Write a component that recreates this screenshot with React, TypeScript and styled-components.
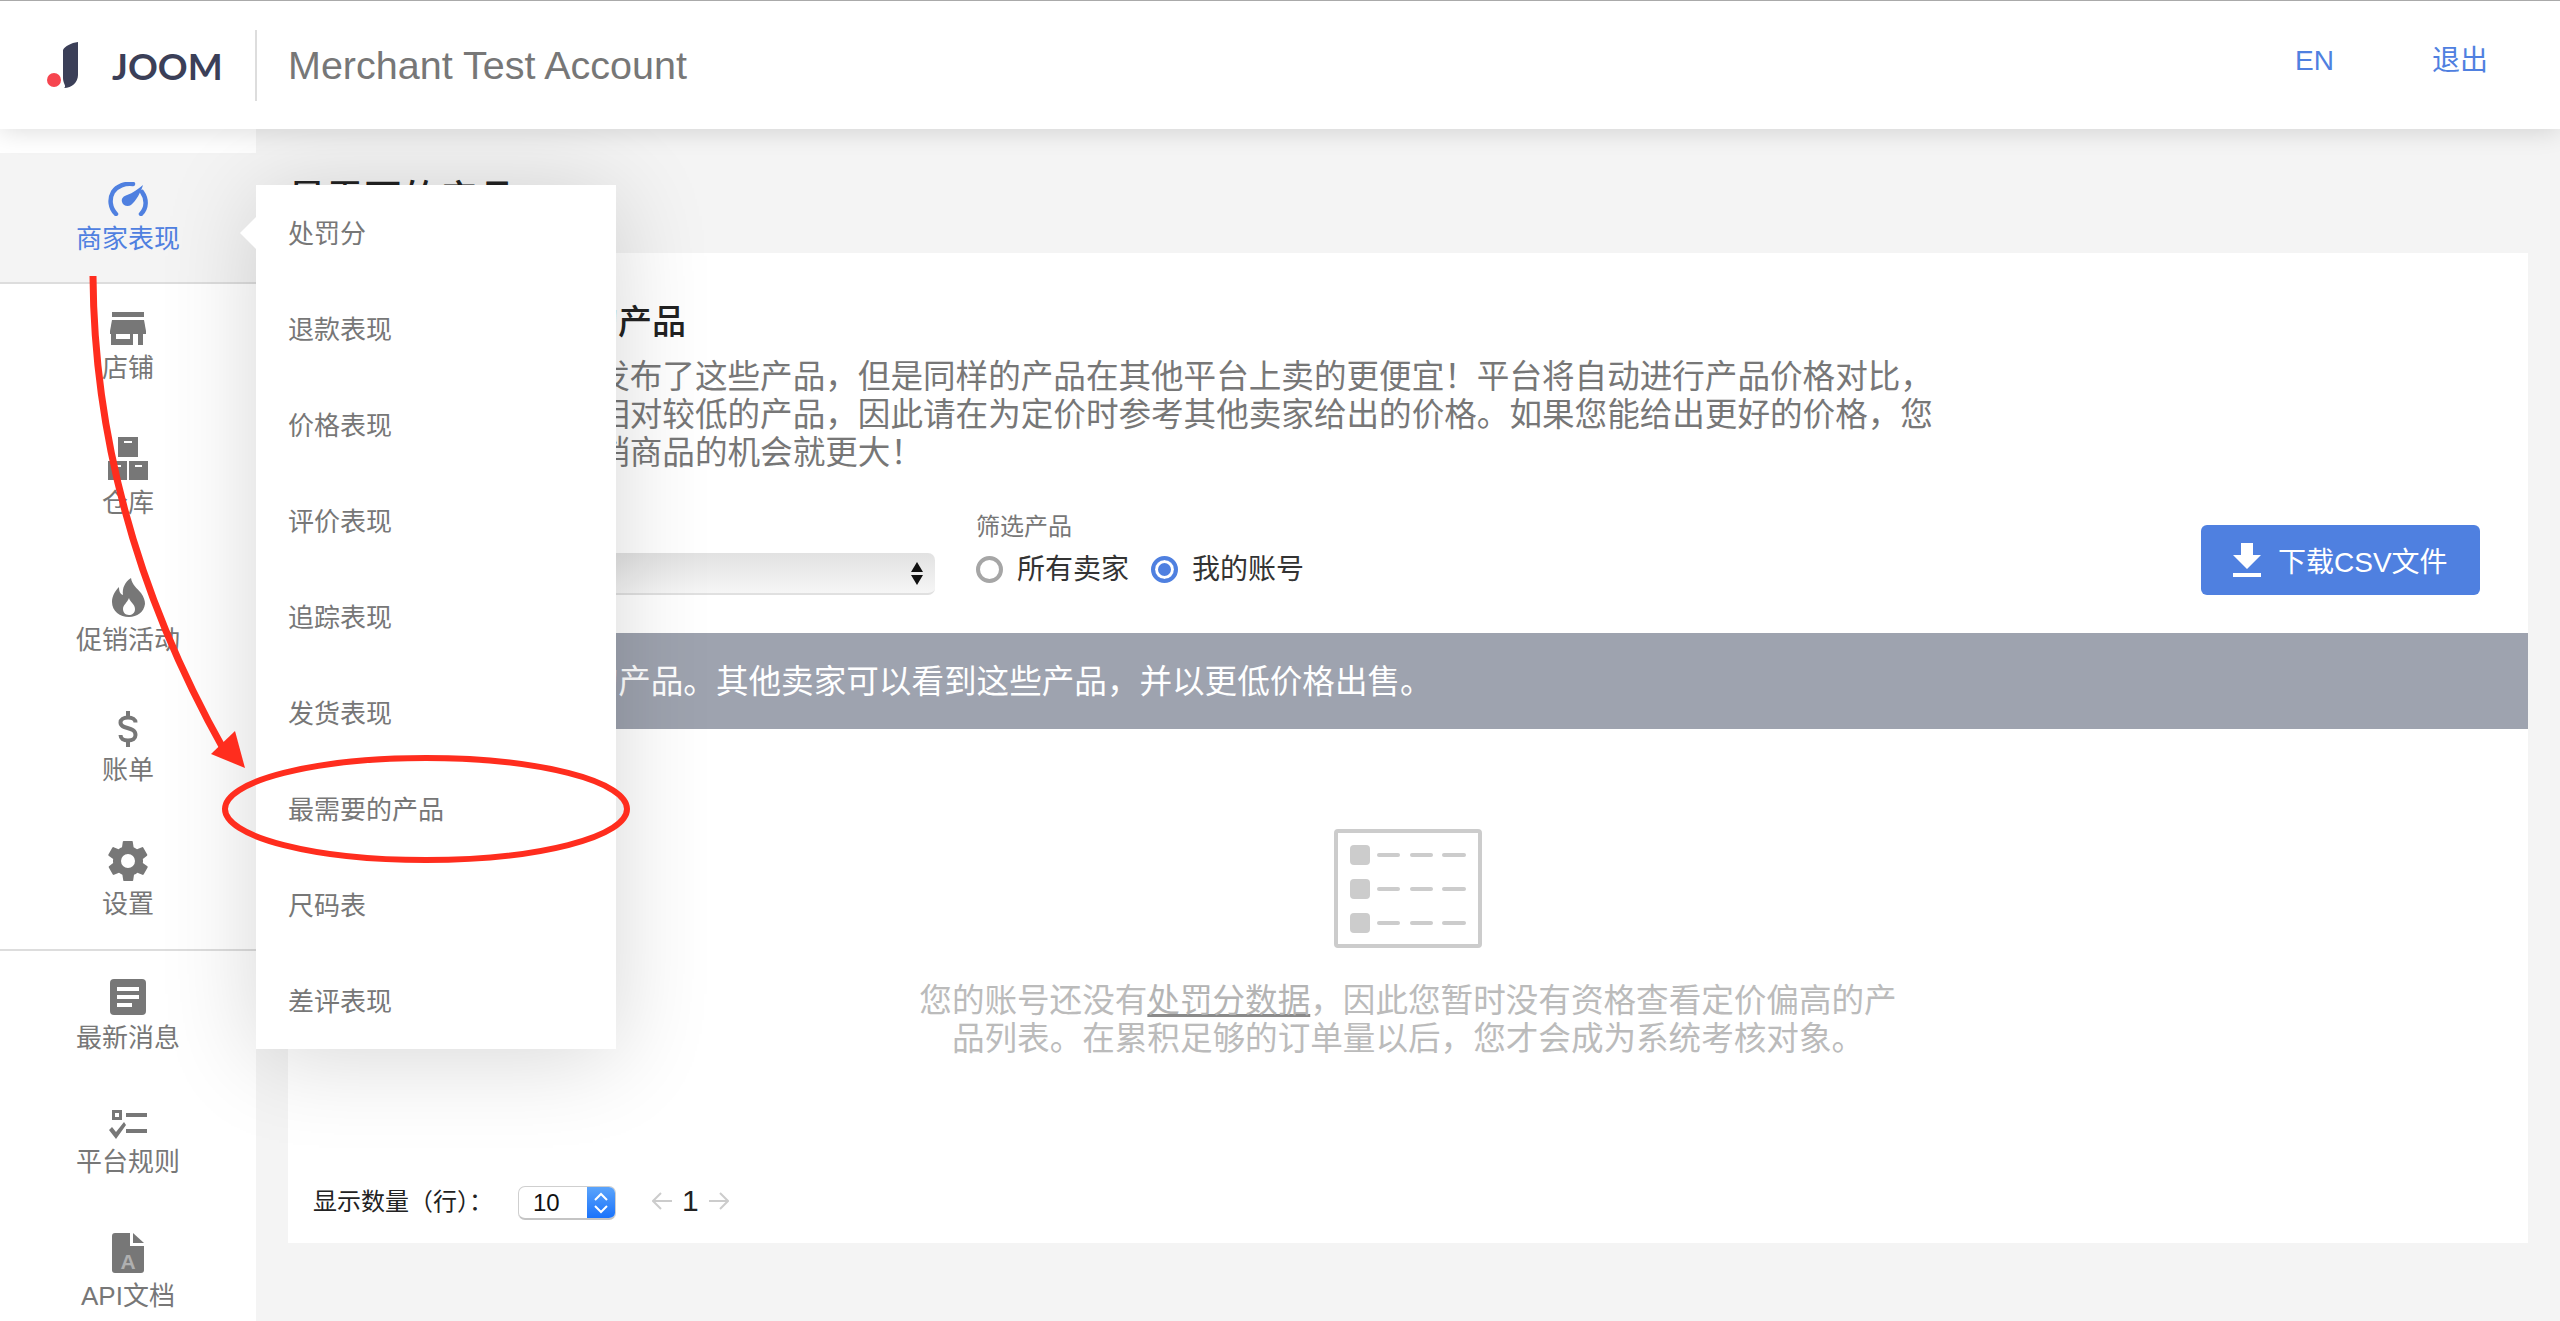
import { ReactNode } from "react";
import styled, { createGlobalStyle } from "styled-components";

const blue = "#4f80e0";
const grey = "#777777";

const GlobalStyle = createGlobalStyle`
  html, body {
    margin: 0;
    padding: 0;
    background: #f4f4f4;
  }
  * {
    box-sizing: border-box;
  }
  body {
    font-family: "Liberation Sans", "Noto Sans CJK SC", sans-serif;
  }
`;

const GaugeIcon = () => (
  <svg width="42" height="34" viewBox="0 0 42 34">
    <path d="M9 32C3 26 2 17 6 10C10 4 18 1 26 2" fill="none" stroke={blue} strokeWidth="4.5" strokeLinecap="round" />
    <path d="M35 10C40 17 40 26 34 32" fill="none" stroke={blue} strokeWidth="4.5" strokeLinecap="round" />
    <path d="M36 3C34 10 29 19 24 23C21 25 16 24 15 20C14 16 17 14 20 13C26 11 31 7 36 3Z" fill={blue} />
  </svg>
);

const StoreIcon = () => (
  <svg width="36" height="33" viewBox="0 0 36 33">
    <rect x="2" y="0" width="32" height="5" fill={grey} />
    <path d="M2 8H34L36 19V22H0V19Z" fill={grey} />
    <path d="M1 22H6V27H20V22H23V33H1Z" fill={grey} />
    <rect x="28" y="22" width="5" height="11" fill={grey} />
  </svg>
);

const WarehouseIcon = () => (
  <svg width="40" height="43" viewBox="0 0 40 43">
    <rect x="10" y="0" width="20" height="20" fill={grey} />
    <rect x="0" y="24" width="19" height="19" fill={grey} />
    <rect x="21" y="24" width="19" height="19" fill={grey} />
    <rect x="16" y="4" width="8" height="2" fill="#fff" />
    <rect x="6" y="28" width="7" height="2" fill="#fff" />
    <rect x="27" y="28" width="7" height="2" fill="#fff" />
  </svg>
);

const FireIcon = () => (
  <svg width="33" height="39" viewBox="0 0 33 39">
    <path
      d="M19 0C20 7 25 10 29 15C32 19 33 23 33 26C32 34 25 39 17 39C8 39 0 33 0 24C0 18 3 13 7 9C7 13 8 16 11 17C10 10 13 4 19 0Z"
      fill={grey}
    />
    <path d="M17 20C18 24 23 26 23 31C23 35 20 37 17 37C13 37 11 34 11 31C11 27 15 25 17 20Z" fill="#fff" />
  </svg>
);

const DollarIcon = () => (
  <svg width="20" height="36" viewBox="0 0 20 36">
    <path d="M17.5 11.5C17.5 8.5 14.5 6.5 10 6.5C5.5 6.5 2.5 8.5 2.5 11.5C2.5 19 17.5 15 17.5 24C17.5 27.500 14.5 29.500 10 29.500C5.5 29.500 2.5 27.500 2.5 24" fill="none" stroke={grey} strokeWidth="4" />
    <rect x="8" y="0" width="4" height="7" fill={grey} />
    <rect x="8" y="29" width="4" height="7" fill={grey} />
  </svg>
);

const GearIcon = () => (
  <svg width="40" height="40" viewBox="2 2 20 20">
    <path
      d="M19.4 13c.1-.3.1-.7.1-1s0-.7-.1-1l2.100-1.600c.2-.2.2-.4.1-.6l-2-3.500c-.1-.2-.4-.3-.6-.2l-2.500 1c-.5-.4-1.100-.7-1.700-1l-.4-2.600c0-.3-.2-.5-.5-.5h-4c-.3 0-.5.2-.5.400l-.4 2.700c-.6.2-1.200.6-1.700 1l-2.500-1c-.2-.1-.5 0-.6.2l-2 3.500c-.1.2-.1.4.1.600L4.600 11c-.1.3-.1.7-.1 1s0 .7.1 1l-2.100 1.600c-.2.2-.2.4-.1.6l2 3.500c.1.2.4.3.6.2l2.500-1c.5.4 1.100.7 1.700 1l.4 2.600c0 .3.2.5.5.5h4c.3 0 .5-.2.5-.4l.4-2.700c.6-.2 1.200-.6 1.700-1l2.500 1c.2.1.5 0 .6-.2l2-3.500c.1-.2.1-.4-.1-.6zM12 15.500a3.500 3.500 0 1 1 0-7 3.500 3.500 0 0 1 0 7z"
      fill={grey}
    />
  </svg>
);

const NewsIcon = () => (
  <svg width="36" height="36" viewBox="0 0 36 36">
    <rect width="36" height="36" rx="4" fill={grey} />
    <rect x="7" y="8" width="22" height="4" fill="#fff" />
    <rect x="7" y="16" width="22" height="4" fill="#fff" />
    <rect x="7" y="24" width="15" height="4" fill="#fff" />
  </svg>
);

const RulesIcon = () => (
  <svg width="38" height="29" viewBox="0 0 38 29">
    <path d="M3 0H13V10H3ZM6 3V7H10V3Z" fill={grey} fillRule="evenodd" />
    <rect x="17" y="3" width="21" height="4" fill={grey} />
    <rect x="17" y="19" width="21" height="4" fill={grey} />
    <path d="M0 20L3 17L7 22L15 12L17 15L7 29Z" fill={grey} />
  </svg>
);

const ApiIcon = () => (
  <svg width="32" height="40" viewBox="0 0 32 40">
    <path d="M3 0H18V13H32V37C32 39 31 40 29 40H3C1 40 0 39 0 37V3C0 1 1 0 3 0Z" fill={grey} />
    <path d="M21 0L32 10H21Z" fill={grey} />
    <text x="16" y="36" fontSize="21" fontWeight="700" textAnchor="middle" fill="#b0b0b0" fontFamily="Liberation Sans, sans-serif">
      A
    </text>
  </svg>
);

const DownloadIcon = () => (
  <svg width="28" height="34" viewBox="0 0 28 34">
    <path d="M8 0H20V12H28L14 26L0 12H8Z" fill="#fff" />
    <rect x="0" y="30" width="28" height="4" fill="#fff" />
  </svg>
);

const EmptyIcon = () => (
  <svg width="148" height="119" viewBox="0 0 148 119">
    <rect x="2" y="2" width="144" height="115" rx="2" fill="none" stroke="#cccccc" strokeWidth="4" />
    {[16, 50, 84].map((y) => (
      <g key={y} fill="#cccccc">
        <rect x="16" y={y} width="20" height="20" rx="4" />
        <rect x="43" y={y + 8} width="23" height="4" rx="2" />
        <rect x="76" y={y + 8} width="23" height="4" rx="2" />
        <rect x="108" y={y + 8} width="24" height="4" rx="2" />
      </g>
    ))}
  </svg>
);

const Page = styled.div`
  position: relative;
  height: 100vh;
  overflow: hidden;
  display: flex;
  flex-direction: column;
  background: #f4f4f4;
`;

const Header = styled.header`
  position: relative;
  z-index: 3;
  height: 129px;
  flex: none;
  display: flex;
  align-items: center;
  background: #fff;
  border-top: 1px solid #aaaaaa;
  box-shadow: 0 2px 24px rgba(0, 0, 0, 0.14);
  padding-left: 47px;
  padding-right: 72px;
`;

const LogoMark = styled.svg`
  width: 32px;
  height: 46px;
  flex: none;
`;

const LogoText = styled.span`
  margin-left: 33px;
  width: 143px;
  font-family: "Lato", sans-serif;
  font-size: 37px;
  font-weight: 700;
  color: #3b3f58;
`;

const LogoDivider = styled.div`
  width: 2px;
  height: 71px;
  background: #dddddd;
  margin-right: 31px;
`;

const AccountName = styled.span`
  font-size: 39.5px;
  line-height: 48px;
  color: ${grey};
`;

const HeaderLinks = styled.nav`
  margin-left: auto;
  display: flex;
  align-items: center;
  gap: 98px;
  margin-top: -8px;
`;

const HeaderLink = styled.a`
  font-size: 28px;
  line-height: 40px;
  color: ${blue};
`;

const Body = styled.div`
  flex: 1;
  display: flex;
  min-height: 0;
`;

const Sidebar = styled.aside`
  width: 256px;
  flex: none;
  background: #fff;
  padding-top: 24px;
`;

const NavItem = styled.div<{ $top: number; $bottom?: number; $active?: boolean; $rule?: boolean }>`
  display: flex;
  flex-direction: column;
  align-items: center;
  padding-top: ${(p) => p.$top}px;
  padding-bottom: ${(p) => p.$bottom ?? 0}px;
  background: ${(p) => (p.$active ? "#f4f4f4" : "transparent")};
  border-bottom: ${(p) => (p.$rule ? "2px solid #dddddd" : "none")};
  color: ${(p) => (p.$active ? blue : grey)};
`;

const NavLabel = styled.span`
  font-size: 26px;
  line-height: 36px;
  margin-top: 5px;
`;

const Main = styled.main`
  flex: 1;
  min-width: 0;
  padding: 46px 32px 0;
`;

const PageTitle = styled.h1`
  margin: 0 0 30px;
  font-size: 38px;
  line-height: 48px;
  font-weight: 500;
  color: #222222;
`;

const Card = styled.section`
  height: 990px;
  background: #fff;
  display: flex;
  flex-direction: column;
`;

const CardHead = styled.div`
  padding: 47px 48px 0 16px;
`;

const CardTitle = styled.h2`
  margin: 0 0 14px 8px;
  font-size: 34px;
  line-height: 44px;
  font-weight: 500;
  color: #222222;
  white-space: nowrap;
`;

const Intro = styled.p`
  margin: 0;
  width: 1640px;
  font-size: 32.6px;
  line-height: 38px;
  color: ${grey};
`;

const Controls = styled.div`
  display: flex;
  align-items: flex-end;
  margin-top: 40px;
  margin-bottom: 38px;
`;

const ProductSelect = styled.div`
  width: 631px;
  height: 42px;
  border-radius: 7px;
  background: linear-gradient(#e2e2e2, #f6f6f6);
  border-bottom: 2px solid #e0e0e0;
  display: flex;
  align-items: center;
  justify-content: flex-end;
  padding-right: 12px;
`;

const SelectArrows = styled.span`
  display: flex;
  flex-direction: column;
  gap: 3px;
`;

const ArrowUp = styled.i`
  display: block;
  border-left: 6px solid transparent;
  border-right: 6px solid transparent;
  border-bottom: 10px solid #111111;
`;

const ArrowDown = styled.i`
  display: block;
  border-left: 6px solid transparent;
  border-right: 6px solid transparent;
  border-top: 10px solid #111111;
`;

const FilterGroup = styled.div`
  margin-left: 41px;
  height: 83px;
`;

const FilterLabel = styled.div`
  font-size: 24px;
  line-height: 30px;
  color: ${grey};
`;

const RadioRow = styled.div`
  display: flex;
  align-items: center;
  gap: 22px;
  margin-top: 11px;
`;

const RadioOption = styled.label`
  display: flex;
  align-items: center;
  gap: 14px;
  font-size: 28px;
  line-height: 34px;
  color: #333333;
`;

const RadioDot = styled.span<{ $checked?: boolean }>`
  width: 27px;
  height: 27px;
  margin-top: -2px;
  border-radius: 50%;
  background: #fff;
  border: ${(p) => (p.$checked ? `4px solid ${blue}` : "4px solid #a6a6a6")};
  box-shadow: ${(p) => (p.$checked ? `inset 0 0 0 3px #fff, inset 0 0 0 12px ${blue}` : "none")};
`;

const DownloadButton = styled.button`
  margin-left: auto;
  width: 279px;
  height: 70px;
  padding: 0 0 0 32px;
  border: none;
  border-radius: 6px;
  background: ${blue};
  color: #fff;
  font-family: inherit;
  font-size: 28px;
  display: flex;
  align-items: center;
  gap: 17px;
`;

const Banner = styled.div`
  height: 96px;
  flex: none;
  display: flex;
  align-items: center;
  padding: 0 0 5px 37px;
  background: #9ea3af;
  color: #fff;
  font-size: 32.6px;
`;

const EmptyState = styled.div`
  display: flex;
  flex-direction: column;
  align-items: center;
  margin-top: 100px;
`;

const EmptyText = styled.p`
  width: 985px;
  margin: 34px 0 0;
  text-align: center;
  font-size: 32.6px;
  line-height: 38px;
  color: #bbbbbb;
`;

const EmptyLink = styled.a`
  color: #b4b4b4;
  text-decoration: underline;
  text-decoration-color: #8a8a8a;
`;

const Footer = styled.div`
  margin-top: auto;
  padding: 0 0 23px 25px;
  display: flex;
  align-items: center;
`;

const FooterLabel = styled.span`
  width: 205px;
  font-size: 24px;
  line-height: 32px;
  margin-top: -2px;
  color: #222222;
`;

const RowsSelect = styled.div`
  width: 98px;
  height: 34px;
  border-radius: 7px;
  border: 1px solid #cfcfcf;
  border-bottom: 2px solid #c4c4c4;
  background: #fff;
  display: flex;
  align-items: stretch;
  justify-content: space-between;
  font-size: 24px;
  line-height: 32px;
  padding-left: 14px;
  color: #111111;
  overflow: hidden;
`;

const RowsStepper = styled.span`
  width: 28px;
  background: linear-gradient(#5ba4fb, #1a73fb);
  display: flex;
  align-items: center;
  justify-content: center;
`;

const Pager = styled.div`
  margin-left: 36px;
  margin-top: -4px;
  display: flex;
  align-items: center;
  gap: 10px;
  font-size: 30px;
  line-height: 34px;
  color: #222222;
`;

const Flyout = styled.div`
  position: absolute;
  z-index: 2;
  left: 256px;
  top: 185px;
  width: 360px;
  height: 864px;
  padding: 0 32px;
  background: #fff;
  box-shadow: 0 8px 90px rgba(0, 0, 0, 0.16);
  display: flex;
  flex-direction: column;

  &::before {
    content: "";
    position: absolute;
    left: -16px;
    top: 32px;
    border-top: 16px solid transparent;
    border-bottom: 16px solid transparent;
    border-right: 16px solid #fff;
  }
`;

const FlyoutItem = styled.div`
  height: 96px;
  padding-bottom: 3px;
  display: flex;
  align-items: center;
  font-size: 26px;
  color: ${grey};
`;

const Annotation = styled.svg`
  position: absolute;
  z-index: 4;
  left: 0;
  top: 0;
  width: 700px;
  height: 900px;
  pointer-events: none;
`;

type NavEntry = {
  label: string;
  icon: ReactNode;
  top: number;
  bottom?: number;
  active?: boolean;
  rule?: boolean;
};

const navItems: NavEntry[] = [
  { label: "商家表现", icon: <GaugeIcon />, top: 29, bottom: 25, active: true, rule: true },
  { label: "店铺", icon: <StoreIcon />, top: 28 },
  { label: "仓库", icon: <WarehouseIcon />, top: 51 },
  { label: "促销活动", icon: <FireIcon />, top: 57 },
  { label: "账单", icon: <DollarIcon />, top: 53 },
  { label: "设置", icon: <GearIcon />, top: 53, bottom: 27, rule: true },
  { label: "最新消息", icon: <NewsIcon />, top: 28 },
  { label: "平台规则", icon: <RulesIcon />, top: 54 },
  { label: "API文档", icon: <ApiIcon />, top: 53 },
];

const flyoutItems = ["处罚分", "退款表现", "价格表现", "评价表现", "追踪表现", "发货表现", "最需要的产品", "尺码表", "差评表现"];

export default function App() {
  return (
    <Page>
      <GlobalStyle />
      <Header>
        <LogoMark viewBox="0 0 32 46">
          <path d="M16 8C18 4 24 1 31 0V33C31 40 25 46 17 46C20 44 16 42 16 36Z" fill="#3b3f58" />
          <circle cx="7" cy="38" r="7" fill="#f6454f" />
        </LogoMark>
        <LogoText>JOOM</LogoText>
        <LogoDivider />
        <AccountName>Merchant Test Account</AccountName>
        <HeaderLinks>
          <HeaderLink>EN</HeaderLink>
          <HeaderLink>退出</HeaderLink>
        </HeaderLinks>
      </Header>

      <Body>
        <Sidebar>
          {navItems.map((item) => (
            <NavItem key={item.label} $top={item.top} $bottom={item.bottom} $active={item.active} $rule={item.rule}>
              {item.icon}
              <NavLabel>{item.label}</NavLabel>
            </NavItem>
          ))}
        </Sidebar>

        <Main>
          <PageTitle>最需要的产品</PageTitle>
          <Card>
            <CardHead>
              <CardTitle>平台上卖家最需要的产品</CardTitle>
              <Intro>
                您和其他卖家都已经发布了这些产品，但是同样的产品在其他平台上卖的更便宜！平台将自动进行产品价格对比，平台会优先推荐价格相对较低的产品，因此请在为定价时参考其他卖家给出的价格。如果您能给出更好的价格，您获得更多平台推广促销商品的机会就更大！
              </Intro>
              <Controls>
                <ProductSelect>
                  <SelectArrows>
                    <ArrowUp />
                    <ArrowDown />
                  </SelectArrows>
                </ProductSelect>
                <FilterGroup>
                  <FilterLabel>筛选产品</FilterLabel>
                  <RadioRow>
                    <RadioOption>
                      <RadioDot />
                      所有卖家
                    </RadioOption>
                    <RadioOption>
                      <RadioDot $checked />
                      我的账号
                    </RadioOption>
                  </RadioRow>
                </FilterGroup>
                <DownloadButton>
                  <DownloadIcon />
                  下载CSV文件
                </DownloadButton>
              </Controls>
            </CardHead>

            <Banner>以下是您尚未发布的产品。其他卖家可以看到这些产品，并以更低价格出售。</Banner>

            <EmptyState>
              <EmptyIcon />
              <EmptyText>
                您的账号还没有<EmptyLink>处罚分数据</EmptyLink>，因此您暂时没有资格查看定价偏高的产品列表。在累积足够的订单量以后，您才会成为系统考核对象。
              </EmptyText>
            </EmptyState>

            <Footer>
              <FooterLabel>显示数量（行）：</FooterLabel>
              <RowsSelect>
                10
                <RowsStepper>
                  <svg width="16" height="24" viewBox="0 0 16 24">
                    <path d="M2 9L8 3L14 9M2 15L8 21L14 15" fill="none" stroke="#fff" strokeWidth="2" />
                  </svg>
                </RowsStepper>
              </RowsSelect>
              <Pager>
                <svg width="20" height="18" viewBox="0 0 20 18">
                  <path d="M9 1L1 9L9 17M1 9H20" fill="none" stroke="#cccccc" strokeWidth="2" />
                </svg>
                1
                <svg width="20" height="18" viewBox="0 0 20 18">
                  <path d="M11 1L19 9L11 17M19 9H0" fill="none" stroke="#cccccc" strokeWidth="2" />
                </svg>
              </Pager>
            </Footer>
          </Card>
        </Main>
      </Body>

      <Flyout>
        {flyoutItems.map((item) => (
          <FlyoutItem key={item}>{item}</FlyoutItem>
        ))}
      </Flyout>

      <Annotation viewBox="0 0 700 900">
        <path d="M93 276C94 430 134 590 224 750" fill="none" stroke="#ff2d1e" strokeWidth="7" />
        <path d="M235 731L211 754L245 768Z" fill="#ff2d1e" />
        <ellipse cx="426" cy="809" rx="201" ry="51" fill="none" stroke="#ff2d1e" strokeWidth="6" />
      </Annotation>
    </Page>
  );
}
